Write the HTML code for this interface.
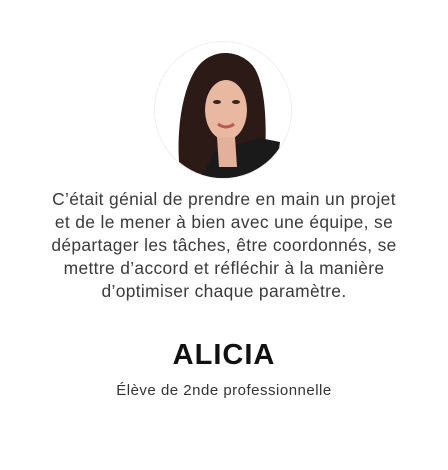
<!DOCTYPE html>
<html><head><meta charset="utf-8"><style>
body{margin:0;width:448px;height:470px;background:#fff;font-family:"Liberation Sans",sans-serif;color:#3a3a3a;position:relative;overflow:hidden}
.av{position:absolute;left:155px;top:42px;width:136px;height:136px;border-radius:50%;overflow:hidden;box-shadow:0 0 0 1px #eee}
.q{position:absolute;left:0;width:448px;top:188px;text-align:center;font-size:17.4px;line-height:23px;letter-spacing:0.35px}
.n{position:absolute;left:0;width:448px;top:339px;text-align:center;font-size:29px;font-weight:bold;color:#111;letter-spacing:1px}
.s{position:absolute;left:0;width:448px;top:382px;text-align:center;font-size:15px;color:#333;letter-spacing:0.5px}
</style></head><body>
<div class="av"><svg width="136" height="136" viewBox="0 0 136 136">
<rect width="136" height="136" fill="#fff"/>
<path d="M25 130 C20 90 28 40 45 22 C60 6 85 8 98 24 C110 40 112 80 110 110 L122 100 L128 136 L25 136Z" fill="#2b1a16"/>
<path d="M60 110 L45 136 L120 136 L125 100 L105 96 Z" fill="#1a1a1a"/>
<ellipse cx="71" cy="68" rx="21" ry="30" fill="#e8b8a0"/>
<path d="M62 95 L80 95 L82 125 L64 125 Z" fill="#e3b09a"/>
<path d="M48 40 C58 22 86 22 94 42 C86 30 60 30 52 50 Z" fill="#2b1a16"/>
<path d="M63 82 Q71 88 79 82" stroke="#b85a5a" stroke-width="3" fill="none"/>
<ellipse cx="62" cy="60" rx="4" ry="2" fill="#3a2420"/><ellipse cx="81" cy="60" rx="4" ry="2" fill="#3a2420"/>
</svg></div>
<div class="q">C’était génial de prendre en main un projet<br>et de le mener à bien avec une équipe, se<br>départager les tâches, être coordonnés, se<br>mettre d’accord et réfléchir à la manière<br>d’optimiser chaque paramètre.</div>
<div class="n">ALICIA</div>
<div class="s">Élève de 2nde professionnelle</div>
</body></html>
